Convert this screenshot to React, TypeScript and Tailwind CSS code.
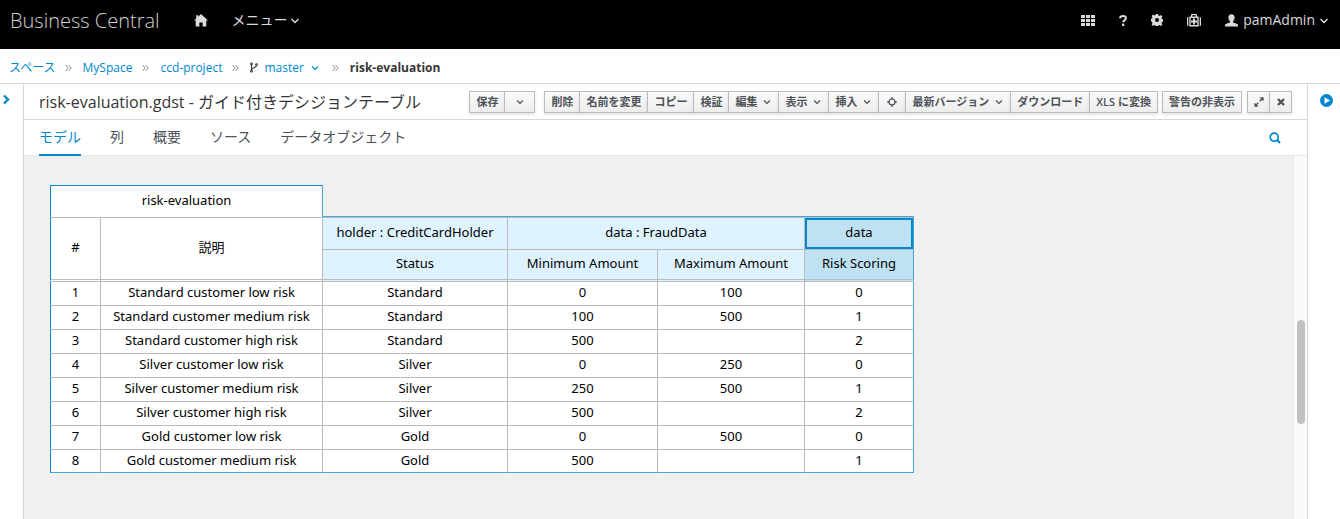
import type { ReactNode } from "react";

function Angle({ className = "" }: { className?: string }) {
  return (
    <svg viewBox="0 0 10 10" aria-hidden="true" className={`size-[10px] shrink-0 fill-none stroke-current ${className}`} strokeWidth="1.2">
      <path d="M2 3.500l3 3 3-3" />
    </svg>
  );
}

function WideAngle({ className = "" }: { className?: string }) {
  return (
    <svg viewBox="0 0 10 10" aria-hidden="true" className={`size-[10px] shrink-0 fill-none stroke-current ${className}`} strokeWidth="1.400">
      <path d="M1.500 4l3.500 3.500L8.500 4" />
    </svg>
  );
}

function Separator() {
  return (
    <svg viewBox="0 0 7 8" aria-hidden="true" className="h-2 w-[7px] shrink-0 fill-none stroke-[#8b8d8f]">
      <path d="M.5 1l2.700 3L.5 7M3.500 1l2.700 3-2.700 3" strokeWidth="1" />
    </svg>
  );
}

function ToolButton({ children, menu, label, className = "px-1.5" }: { children?: ReactNode; menu?: boolean; label?: string; className?: string }) {
  return (
    <button
      type="button"
      aria-label={label}
      className={`-ml-px flex h-[22px] items-center gap-[5px] border border-[#bbb] bg-linear-to-b from-[#fafafa] to-[#ededed] text-[11px] leading-4 font-semibold whitespace-nowrap text-[#4d5258] shadow-[0_2px_3px_rgba(3,3,3,0.1)] ${className}`}
    >
      {children}
      {menu && <Angle />}
    </button>
  );
}

function Header() {
  return (
    <header className="flex h-[49px] shrink-0 items-start bg-black pr-[11px] pl-[10px] text-sm leading-5 text-[#dbdbdb]">
      <a href="#home" className="mt-[6px] text-xl leading-[30px] font-light text-[#d1d1d1]">Business Central</a>
      <a href="#home" aria-label="Home" className="mt-[14px] ml-[34px]">
        <svg viewBox="0 0 14 13" className="h-[13px] w-[14px] fill-current">
          <path d="M7 0l7 6.600h-1.700V12.400H8.600V8.400H5.400v4H1.700V6.600H0L2.200 4.500V1.300h1.900v1.400z" />
        </svg>
      </a>
      <button type="button" className="mt-[10px] ml-6 flex items-center gap-[2px]">
        メニュー<WideAngle />
      </button>
      <nav className="mt-[10px] ml-auto flex h-5 items-center">
        <button type="button" aria-label="Applications">
          <svg viewBox="0 0 14 11" className="h-[11px] w-[14px] fill-current">
            <path d="M0 0h4v3H0zM5 0h4v3H5zM10 0h4v3h-4zM0 4h4v3H0zM5 4h4v3H5zM10 4h4v3h-4zM0 8h4v3H0zM5 8h4v3H5zM10 8h4v3h-4z" />
          </svg>
        </button>
        <button type="button" aria-label="Help" className="ml-6">
          <svg viewBox="0 0 8 11" className="h-[11px] w-2">
            <path d="M1 3.400C1.200 1.900 2.300 1.100 4 1.100c1.800 0 2.900.8 2.900 2.200C6.900 5.100 4.200 5.100 4.200 7.300" className="fill-none stroke-current" strokeWidth="2" />
            <path d="M3 8.600h2.300V11H3z" className="fill-current" />
          </svg>
        </button>
        <button type="button" aria-label="Settings" className="ml-6">
          <svg viewBox="0 0 12 12" className="size-3 fill-current">
            <path fillRule="evenodd" d="M4.900 0h2.200l.4 1.600 1 .4 1.400-.9 1.500 1.500-.9 1.400.4 1 1.600.4v2.200l-1.600.4-.4 1 .9 1.400-1.500 1.500-1.400-.9-1 .4-.4 1.600H4.900l-.4-1.600-1-.4-1.400.9-1.500-1.500.9-1.400-.4-1L-.1 7.100V4.900l1.200-.4.4-1-.9-1.400L2.100.6l1.400.9 1-.4zM6 4a2 2 0 100 4 2 2 0 000-4z" />
          </svg>
        </button>
        <button type="button" aria-label="Administration" className="ml-6">
          <svg viewBox="0 0 14 13" className="h-[13px] w-[14px] fill-current">
            <path d="M0 4q0-1 1.300-1.300v9.600Q0 12 0 11zM14 4q0-1-1.300-1.300v9.600Q14 12 14 11z" />
            <path fillRule="evenodd" d="M2.300 2.500H4V1q0-1 1-1h4q1 0 1 1v1.500h1.700v10H2.300zM5.200 1.200v1.300h3.600V1.200zM3.700 3.900v7.200h6.600V3.900z" />
            <path d="M6 4.500h2v2h2v2H8v2H6v-2H4v-2h2z" />
          </svg>
        </button>
        <button type="button" className="ml-6 flex items-center">
          <svg viewBox="0 0 13 13" aria-hidden="true" className="mr-[5px] size-[13px] fill-current">
            <path d="M6.500.2c2 0 3.100 1.300 3.100 3.200 0 1.700-.7 2.900-1.600 3.700v1.400l3.700 1.300c.9.300 1.200.8 1.300 1.600v1H0v-1c.1-.8.4-1.300 1.300-1.600L5 8.500V7.100C4.100 6.300 3.400 5.100 3.400 3.400 3.400 1.500 4.500.2 6.500.2z" />
          </svg>
          pamAdmin
          <WideAngle className="ml-1" />
        </button>
      </nav>
    </header>
  );
}

function Breadcrumbs() {
  return (
    <nav aria-label="Breadcrumb" className="flex h-[35px] shrink-0 items-center border-b border-[#d8d8d8] pt-[4px] pb-px pl-[9px] text-xs leading-5 text-[#0088ce]">
      <a href="#spaces" className="mr-[9px]">スペース</a>
      <Separator />
      <a href="#myspace" className="mr-2.5 ml-[11px]">MySpace</a>
      <Separator />
      <a href="#project" className="mr-2.5 ml-[11px]">ccd-project</a>
      <Separator />
      <button type="button" className="mr-3 ml-[11px] flex items-center">
        <svg viewBox="0 0 8 11" aria-hidden="true" className="mr-1.5 h-[11px] w-2 fill-none stroke-[#363636]">
          <path d="M1.500 2.500v6M6.500 3.500C6.500 6 1.500 5.500 1.500 8" strokeWidth="1.200" />
          <path d="M.7 1h1.600v1.500H.7zM5.700 1.800h1.600v1.500H5.700zM.7 8.500h1.600V10H.7z" />
        </svg>
        master
        <Angle className="ml-1.5" />
      </button>
      <Separator />
      <span className="ml-[11px] font-bold text-[#363636]">risk-evaluation</span>
    </nav>
  );
}

function Toolbar() {
  return (
    <div className="flex h-9 shrink-0 items-center border-b border-[#d8d8d8] px-[15px]">
      <h1 className="mr-auto text-base leading-6 whitespace-nowrap text-[#363636]">risk-evaluation.gdst - ガイド付きデシジョンテーブル</h1>
      <div className="flex">
        <ToolButton>保存</ToolButton>
        <ToolButton label="保存オプション" menu className="w-[31px] justify-center" />
      </div>
      <div className="ml-[10px] flex">
        <ToolButton>削除</ToolButton>
        <ToolButton>名前を変更</ToolButton>
        <ToolButton>コピー</ToolButton>
        <ToolButton>検証</ToolButton>
        <ToolButton menu>編集</ToolButton>
        <ToolButton menu>表示</ToolButton>
        <ToolButton menu>挿入</ToolButton>
        <ToolButton label="中央に移動" className="w-7 justify-center">
          <svg viewBox="0 0 10 10" className="size-[10px] shrink-0 fill-none stroke-current">
            <circle cx="5" cy="5" r="3" strokeWidth="1.100" />
            <path d="M5 .2v2.600M5 7.200v2.600M.2 5h2.600M7.200 5h2.600" strokeWidth="1.500" />
          </svg>
        </ToolButton>
        <ToolButton menu>最新バージョン</ToolButton>
        <ToolButton>ダウンロード</ToolButton>
        <ToolButton>XLS に変換</ToolButton>
      </div>
      <div className="ml-[5px] flex">
        <ToolButton>警告の非表示</ToolButton>
      </div>
      <div className="ml-1.5 flex">
        <ToolButton label="拡大" className="w-[23px] justify-center">
          <svg viewBox="0 0 10 10" className="size-[10px] shrink-0 fill-none stroke-current" strokeWidth="1.300">
            <path d="M6.200 1H9v2.800M9 1L5.700 4.300M3.800 9H1V6.200M1 9l3.300-3.300" />
          </svg>
        </ToolButton>
        <ToolButton label="閉じる" className="w-[23px] justify-center">
          <svg viewBox="0 0 10 10" className="size-[10px] shrink-0 fill-none stroke-current" strokeWidth="2.300">
            <path d="M2 2l6 6M8 2L2 8" />
          </svg>
        </ToolButton>
      </div>
    </div>
  );
}

const tabs = ["モデル", "列", "概要", "ソース", "データオブジェクト"];

function Tabs() {
  return (
    <div className="flex h-9 shrink-0 items-stretch border-b border-[#e8e8e8] px-[15px]">
      <div role="tablist" className="-mb-px flex gap-[29px] text-sm leading-5">
        {tabs.map((tab, i) => (
          <button
            key={tab}
            type="button"
            role="tab"
            aria-selected={i === 0}
            className={i === 0 ? "border-b-2 border-[#0088ce] text-[#0088ce]" : "border-b-2 border-transparent text-[#4d5258]"}
          >
            {tab}
          </button>
        ))}
      </div>
      <button type="button" aria-label="検索" className="mr-[11px] ml-auto text-[#0088ce]">
        <svg viewBox="0 0 12 12" className="size-3 fill-none stroke-current" strokeWidth="1.700">
          <path d="M8 8l3 3" strokeWidth="2.200" />
          <circle cx="5.200" cy="5.200" r="4" />
        </svg>
      </button>
    </div>
  );
}

const rows = [
  ["1", "Standard customer low risk", "Standard", "0", "100", "0"],
  ["2", "Standard customer medium risk", "Standard", "100", "500", "1"],
  ["3", "Standard customer high risk", "Standard", "500", "", "2"],
  ["4", "Silver customer low risk", "Silver", "0", "250", "0"],
  ["5", "Silver customer medium risk", "Silver", "250", "500", "1"],
  ["6", "Silver customer high risk", "Silver", "500", "", "2"],
  ["7", "Gold customer low risk", "Gold", "0", "500", "0"],
  ["8", "Gold customer medium risk", "Gold", "500", "", "1"],
];

function DecisionTable() {
  return (
    <table className="w-[864px] table-fixed border-separate border-spacing-0 text-center font-['Noto_Sans','Noto_Sans_CJK_JP',sans-serif] text-[13px] leading-[18px] text-black [&_td]:p-0 [&_td]:pb-[3px] [&_th]:p-0 [&_th]:pb-[3px] [&_th]:font-normal">
      <colgroup>
        <col className="w-[50px]" />
        <col className="w-[222px]" />
        <col className="w-[185px]" />
        <col className="w-[150px]" />
        <col className="w-[147px]" />
        <col className="w-[110px]" />
      </colgroup>
      <thead>
        <tr className="h-8">
          <th colSpan={2} className="border-t border-l border-[#0088ce] bg-white">risk-evaluation</th>
          <td colSpan={4} className="border-b border-l border-[#47a6d8]" />
        </tr>
        <tr className="h-8">
          <th rowSpan={2} className="border-t border-b-3 border-l border-[#bbb] border-l-[#0088ce] bg-white [border-bottom-style:double]">#</th>
          <th rowSpan={2} className="border-t border-b-3 border-l border-[#bbb] bg-white [border-bottom-style:double]">説明</th>
          <th className="border-t border-l border-[#bbb] bg-[#def3ff]">holder : CreditCardHolder</th>
          <th colSpan={2} className="border-t border-l border-[#bbb] bg-[#def3ff]">data : FraudData</th>
          <th className="border-x border-t border-[#bbb] border-r-[#47a6d8] bg-[#bee1f4] shadow-[inset_0_0_0_2px_#0088ce]">data</th>
        </tr>
        <tr className="h-[33px]">
          <th className="border-t border-b-3 border-l border-[#bbb] bg-[#def3ff] [border-bottom-style:double]">Status</th>
          <th className="border-t border-b-3 border-l border-[#bbb] bg-[#def3ff] [border-bottom-style:double]">Minimum Amount</th>
          <th className="border-t border-b-3 border-l border-[#bbb] bg-[#def3ff] [border-bottom-style:double]">Maximum Amount</th>
          <th className="border-x border-t border-b-3 border-[#bbb] border-r-[#47a6d8] bg-[#bee1f4] [border-bottom-style:double]">Risk Scoring</th>
        </tr>
      </thead>
      <tbody>
        {rows.map((row) => (
          <tr key={row[0]} className="group h-6 first:h-[23px]">
            {row.map((cell, i) => (
              <td
                key={i}
                className="border-t border-l border-[#bbb] bg-white group-first:border-t-0 group-last:border-b group-last:border-b-[#47a6d8] first:border-l-[#0088ce] last:border-r last:border-r-[#47a6d8]"
              >
                {cell}
              </td>
            ))}
          </tr>
        ))}
      </tbody>
    </table>
  );
}

export default function App() {
  return (
    <div className="flex h-screen flex-col overflow-hidden bg-white font-['Open_Sans','Noto_Sans_CJK_JP',sans-serif]">
      <Header />
      <Breadcrumbs />
      <div className="flex min-h-0 flex-1">
        <aside className="w-6 shrink-0 border-r border-[#d8d8d8] pt-[10px] pl-[3px]">
          <button type="button" aria-label="展開" className="block text-[#0088ce]">
            <svg viewBox="0 0 7 11" className="h-[11px] w-[7px] fill-none stroke-current" strokeWidth="2.400">
              <path d="M1 1.500l4 4-4 4" />
            </svg>
          </button>
        </aside>
        <main className="flex min-w-0 flex-1 flex-col">
          <Toolbar />
          <Tabs />
          <div className="flex min-h-0 flex-1 bg-[#f0f0f0]">
            <div className="min-w-0 flex-1 overflow-hidden pt-[29px] pl-[26px]">
              <DecisionTable />
            </div>
            <div className="w-[14px] shrink-0 border-l border-[#e8e8e8] bg-[#fafafa] px-[3px] pt-[164px]">
              <div className="h-[104px] w-2 rounded-full bg-[#c1c1c1]" />
            </div>
          </div>
        </main>
        <aside className="w-[33px] shrink-0 border-l border-[#d8d8d8] pt-[10px] pl-3">
          <button type="button" aria-label="実行" className="block">
            <svg viewBox="0 0 13 13" className="size-[13px]">
              <circle cx="6.500" cy="6.500" r="6.500" className="fill-[#0088ce]" />
              <path d="M4.500 3.200L10 6.500 4.500 9.800z" className="fill-white" />
            </svg>
          </button>
        </aside>
      </div>
    </div>
  );
}
